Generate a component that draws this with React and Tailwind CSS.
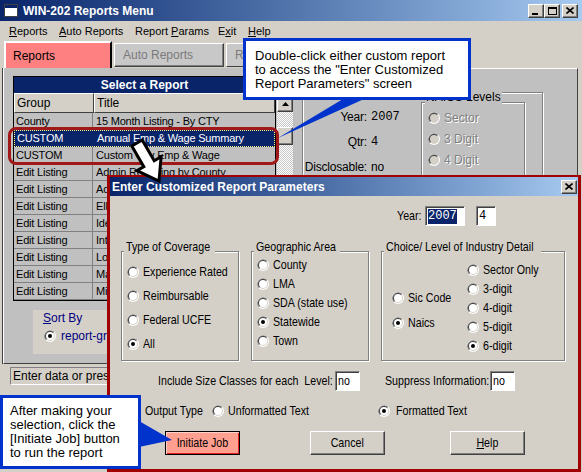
import React from "react";

function N({ children, center = false }) {
  return (
    <span
      className={`inline-block whitespace-pre scale-x-[0.82] ${
        center ? "origin-center" : "origin-left"
      }`}
    >
      {children}
    </span>
  );
}

function Radio({ checked = false, disabled = false }) {
  return (
    <svg width="12" height="12" viewBox="0 0 12 12" className="block shrink-0">
      <circle cx="6" cy="6" r="6" fill="#ffffff" />
      <path d="M1.76 10.24A6 6 0 0 1 10.24 1.76Z" fill="#808080" />
      <circle cx="6" cy="6" r="5" fill="#d4d0c8" />
      <path d="M2.46 9.54A5 5 0 0 1 9.54 2.46Z" fill="#404040" />
      <circle cx="6" cy="6" r="4" fill={disabled ? "#d4d0c8" : "#ffffff"} />
      {checked && <circle cx="6" cy="6" r="2" fill="#000000" />}
    </svg>
  );
}

function RadioRow({ label, checked, disabled, narrow = true }) {
  return (
    <div className="flex items-center gap-[4px] h-[16px] whitespace-nowrap">
      <Radio checked={checked} disabled={disabled} />
      {disabled ? (
        <span className="text-[#808080] [text-shadow:1px_1px_0_#ffffff]">{label}</span>
      ) : narrow ? (
        <N>{label}</N>
      ) : (
        <span>{label}</span>
      )}
    </div>
  );
}

function Group({ title, titleW, className = "", children }) {
  return (
    <div
      className={`border border-[#808080] shadow-[1px_1px_0_#ffffff,inset_1px_1px_0_#ffffff] flex flex-col ${className}`}
    >
      <div
        className={`-mt-[13px] ml-[2px] px-[2px] bg-[#d4d0c8] leading-[15px] whitespace-nowrap overflow-visible ${titleW}`}
      >
        <N>{title}</N>
      </div>
      {children}
    </div>
  );
}

function Input({ className = "", children }) {
  return (
    <div
      className={`h-[20px] bg-white border border-t-[#808080] border-l-[#808080] border-b-white border-r-white shadow-[inset_1px_1px_0_#404040] flex items-center pl-[2px] ${className}`}
    >
      {children}
    </div>
  );
}

function WinBtn({ children }) {
  return (
    <div className="w-[16px] h-[14px] bg-[#d4d0c8] border border-t-white border-l-white border-b-[#404040] border-r-[#404040] shadow-[inset_-1px_-1px_0_#808080] flex items-center justify-center">
      {children}
    </div>
  );
}

function CloseGlyph() {
  return (
    <svg width="8" height="7" viewBox="0 0 8 7" className="block">
      <path d="M0.5 0.5L7.5 6.5M7.5 0.5L0.5 6.5" stroke="#000" strokeWidth="1.6" />
    </svg>
  );
}

function DlgButton({ className = "", children }) {
  return (
    <div
      className={`h-[24px] w-[75px] bg-[#d4d0c8] border border-t-white border-l-white border-b-[#404040] border-r-[#404040] shadow-[inset_-1px_-1px_0_#808080] flex items-center justify-center ${className}`}
    >
      {children}
    </div>
  );
}

const rows = [
  ["County", "15 Month Listing - By CTY"],
  ["CUSTOM", "Annual Emp & Wage Summary", true],
  ["CUSTOM", "Custom Qtly Emp & Wage"],
  ["Edit Listing", "Admin Reporting by County"],
  ["Edit Listing", "Address Listing"],
  ["Edit Listing", "Ell Listing"],
  ["Edit Listing", "Identical Accounts"],
  ["Edit Listing", "Interstate Listing"],
  ["Edit Listing", "Location Listing"],
  ["Edit Listing", "Master File"],
  ["Edit Listing", "Missing Data"],
];

export default function App() {
  return (
    <div className="relative w-[582px] h-[472px] overflow-hidden bg-[#d4d0c8] font-['Liberation_Sans',Arial,sans-serif] text-black select-none">
      {/* Title bar */}
      <div className="h-[21px] flex items-center bg-linear-to-r from-[#0a246a] to-[#a6caf0]">
        <div className="ml-[4px] w-[14px] h-[13px] bg-white border border-[#404040] flex flex-col">
          <div className="h-[3px] bg-[#0a246a]" />
        </div>
        <span className="ml-[5px] text-white font-bold text-[12px] leading-none">
          WIN-202 Reports Menu
        </span>
        <div className="ml-auto mr-[4px] flex items-center">
          <WinBtn>
            <div className="w-[6px] h-[2px] bg-black mt-[6px] -ml-[2px]" />
          </WinBtn>
          <WinBtn>
            <div className="w-[9px] h-[8px] border border-black border-t-2" />
          </WinBtn>
          <div className="ml-[2px]">
            <WinBtn>
              <CloseGlyph />
            </WinBtn>
          </div>
        </div>
      </div>

      {/* Menu bar */}
      <div className="h-[20px] flex items-center text-[11px] pl-[9px]">
        <span className="w-[50px]">
          <span className="underline">R</span>eports
        </span>
        <span className="w-[76px]">
          <span className="underline">A</span>uto Reports
        </span>
        <span className="w-[83px]">
          Report <span className="underline">P</span>arams
        </span>
        <span className="w-[30px]">
          E<span className="underline">x</span>it
        </span>
        <span>
          <span className="underline">H</span>elp
        </span>
      </div>

      {/* Tabs */}
      <div className="h-[27px] flex items-end pl-[4px] text-[12px]">
        <div className="w-[108px] h-[27px] bg-[#ff8080] border-t-2 border-l-2 border-white border-r-2 border-r-black flex items-center pl-[7px]">
          Reports
        </div>
        <div className="ml-[2px] mb-[1px] w-[110px] h-[24px] bg-[#c8c8c8] border border-t-white border-l-white border-b-[#404040] border-r-[#404040] shadow-[inset_-1px_-1px_0_#808080] flex items-center pl-[8px] text-[#7a7a7a]">
          Auto Reports
        </div>
        <div className="ml-[2px] mb-[1px] w-[110px] h-[24px] bg-[#c8c8c8] border border-t-white border-l-white border-b-[#404040] border-r-[#404040] flex items-center pl-[8px] text-[#7a7a7a]">
          Report Params
        </div>
      </div>

      {/* Body */}
      <div className="h-[296px] flex">
        {/* Left panel */}
        <div className="ml-[3px] w-[294px] h-full bg-[#c0c0c0] border-l border-b border-l-white border-b-[#404040] shadow-[-1px_0_0_#404040] pl-[9px] pt-[8px] flex flex-col">
          <div className="flex">
            <div className="w-[263px] border border-black flex flex-col text-[11px] tracking-[-0.2px]">
              <div className="h-[16px] bg-[#0a246a] text-white font-bold text-[12px] tracking-normal flex items-center justify-center">
                Select a Report
              </div>
              <div className="h-[20px] flex text-[12px] tracking-normal">
                <div className="w-[80px] bg-[#d4d0c8] border border-t-white border-l-white border-b-[#404040] border-r-[#404040] flex items-center pl-[2px]">
                  Group
                </div>
                <div className="flex-1 bg-[#d4d0c8] border border-t-white border-l-white border-b-[#404040] border-r-[#404040] flex items-center pl-[2px]">
                  Title
                </div>
              </div>
              {rows.map(([g, t, sel], i) => (
                <div
                  key={i}
                  className={`h-[17px] flex whitespace-nowrap overflow-hidden ${
                    sel
                      ? "bg-[#0a246a] text-white border border-dotted border-[#ffff80]"
                      : "bg-[#c0c0c0] border-b border-[#808080]"
                  }`}
                >
                  <div
                    className={`w-[79px] shrink-0 pl-[2px] flex items-center ${
                      sel ? "" : "border-r border-[#808080]"
                    }`}
                  >
                    {g}
                  </div>
                  <div className="flex-1 pl-[3px] flex items-center">{t}</div>
                </div>
              ))}
            </div>
            {/* Scrollbar */}
            <div className="ml-[1px] mt-[20px] w-[16px] flex flex-col">
              <div className="h-[16px] bg-[#d4d0c8] border border-t-white border-l-white border-b-[#404040] border-r-[#404040] shadow-[inset_-1px_-1px_0_#808080] flex items-center justify-center">
                <svg width="7" height="4" viewBox="0 0 7 4" className="block">
                  <path d="M3.5 0L7 4H0Z" fill="#000" />
                </svg>
              </div>
              <div className="h-[15px] bg-[repeating-conic-gradient(#ffffff_0_25%,#c8c8c8_0_50%)] bg-[length:2px_2px]" />
              <div className="h-[18px] bg-[#d4d0c8] border border-t-white border-l-white border-b-[#404040] border-r-[#404040] shadow-[inset_-1px_-1px_0_#808080]" />
              <div className="flex-1 bg-[repeating-conic-gradient(#ffffff_0_25%,#c8c8c8_0_50%)] bg-[length:2px_2px]" />
            </div>
          </div>
          {/* Sort by */}
          <div className="mt-[9px] ml-[20px] w-[120px] h-[44px] bg-[#d4d0c8] pl-[10px] text-[12px] text-[#000080] flex flex-col">
            <div className="h-[16px] flex items-center">
              <span>
                <span className="underline">S</span>ort By
              </span>
            </div>
            <div className="mt-[2px] h-[16px] pl-[1px] flex items-center gap-[5px] whitespace-nowrap">
              <Radio checked />
              <span>report-group</span>
            </div>
          </div>
        </div>

        {/* Right panel */}
        <div className="flex-1 mr-[4px] h-full bg-[#c0c0c0] border-t border-white border-r border-r-[#404040] flex">
          <div className="ml-[5px] mt-[23px] w-[241px] h-[260px] border border-[#808080] shadow-[inset_1px_1px_0_#ffffff,1px_1px_0_#ffffff] flex">
            <div className="w-[118px] pt-[16px] flex flex-col gap-[9px] text-[12px] tracking-[-0.2px]">
              <div className="h-[16px] flex items-center">
                <span className="w-[64px] text-right">Year:</span>
                <span className="ml-[4px] font-['Liberation_Mono',monospace] tracking-normal">2007</span>
              </div>
              <div className="h-[16px] flex items-center">
                <span className="w-[64px] text-right">Qtr:</span>
                <span className="ml-[4px] font-['Liberation_Mono',monospace] tracking-normal">4</span>
              </div>
              <div className="h-[16px] flex items-center">
                <span className="w-[64px] text-right">Disclosable:</span>
                <span className="ml-[4px]">no</span>
              </div>
            </div>
            <div className="mt-[9px] w-[104px] h-[130px] border border-[#808080] shadow-[inset_1px_1px_0_#ffffff,1px_1px_0_#ffffff] flex flex-col text-[12px] bg-[#c0c0c0]">
              <div className="-mt-[13px] ml-[3px] px-[1px] bg-[#c0c0c0] w-fit leading-[15px] whitespace-nowrap">
                NAICS Levels
              </div>
              <div className="mt-[5px] pl-[6px] flex flex-col gap-[5px]">
                <RadioRow label="Sector" disabled />
                <RadioRow label="3 Digit" disabled />
                <RadioRow label="4 Digit" disabled />
              </div>
            </div>
          </div>
        </div>
      </div>

      {/* Status bar */}
      <div className="mt-[3px] ml-[10px] w-[300px] h-[18px] border border-t-[#808080] border-l-[#808080] border-b-white border-r-white flex items-center pl-[2px] text-[12px]">
        Enter data or press Enter to continue
      </div>

      {/* Red highlight around custom rows */}
      <div className="absolute left-[8px] top-[127px] w-[271px] h-[38px] border-[3px] border-[#a01818] rounded-[8px]" />

      {/* Top callout pointer */}
      <svg
        className="absolute left-[276px] top-[97px]"
        width="92"
        height="44"
        viewBox="0 0 92 44"
      >
        <polygon points="67,2 88,2 2,41" fill="#0033cc" />
      </svg>

      {/* Top callout */}
      <div className="absolute left-[243px] top-[38px] w-[228px] h-[62px] bg-white border-[3px] border-[#0033cc] pl-[9px] pt-[8px] text-[13px] leading-[14px] whitespace-nowrap">
        <div>Double-click either custom report</div>
        <div>to access the "Enter Customized</div>
        <div>Report Parameters" screen</div>
      </div>

      {/* Dialog */}
      <div className="absolute left-[107px] top-[175px] w-[474px] h-[297px] border-[3px] border-t-2 border-[#a00000] bg-[#d4d0c8] flex flex-col">
        <div className="h-[19px] shrink-0 flex items-center pl-[2px] bg-linear-to-r from-[#0a246a] to-[#a6caf0]">
          <span className="text-white font-bold text-[12px] leading-none">
            Enter Customized Report Parameters
          </span>
          <div className="ml-auto mr-[1px]">
            <WinBtn>
              <CloseGlyph />
            </WinBtn>
          </div>
        </div>
        <div className="flex-1 flex flex-col pl-[11px] text-[13px]">
          {/* Year row */}
          <div className="mt-[10px] ml-[276px] h-[20px] flex items-center">
            <span className="w-[28px]">
              <N>Year:</N>
            </span>
            <Input className="w-[40px]">
              <span className="bg-[#0a246a] text-white font-['Liberation_Mono',monospace] text-[12px] leading-[15px]">
                2007
              </span>
            </Input>
            <Input className="ml-[11px] w-[20px]">
              <span className="font-['Liberation_Mono',monospace] text-[12px]">4</span>
            </Input>
          </div>

          {/* Groups */}
          <div className="mt-[25px] h-[110px] flex gap-[12px]">
            <Group title="Type of Coverage" titleW="w-[91px]" className="w-[118px]">
              <div className="mt-[10px] pl-[5px] flex flex-col gap-[8px]">
                <RadioRow label="Experience Rated" />
                <RadioRow label="Reimbursable" />
                <RadioRow label="Federal UCFE" />
                <RadioRow label="All" checked />
              </div>
            </Group>
            <Group title="Geographic Area" titleW="w-[86px]" className="w-[118px]">
              <div className="mt-[3px] pl-[5px] flex flex-col gap-[3px]">
                <RadioRow label="County" />
                <RadioRow label="LMA" />
                <RadioRow label="SDA (state use)" />
                <RadioRow label="Statewide" checked />
                <RadioRow label="Town" />
              </div>
            </Group>
            <Group
              title="Choice/ Level of Industry Detail"
              titleW="w-[157px]"
              className="w-[184px]"
            >
              <div className="flex">
                <div className="w-[85px] pl-[10px] mt-[36px] flex flex-col gap-[9px]">
                  <RadioRow label="Sic Code" />
                  <RadioRow label="Naics" checked />
                </div>
                <div className="mt-[8px] flex flex-col gap-[3px]">
                  <RadioRow label="Sector Only" />
                  <RadioRow label="3-digit" />
                  <RadioRow label="4-digit" />
                  <RadioRow label="5-digit" />
                  <RadioRow label="6-digit" checked />
                </div>
              </div>
            </Group>
          </div>

          {/* Include / Suppress row */}
          <div className="mt-[10px] h-[20px] flex items-center whitespace-nowrap">
            <span className="ml-[37px] w-[173px]">
              <N>Include Size Classes for each  Level:</N>
            </span>
            <Input className="ml-[4px] w-[25px]">
              <N>no</N>
            </Input>
            <span className="ml-[25px] w-[103px]">
              <N>Suppress Information:</N>
            </span>
            <Input className="ml-[2px] w-[25px]">
              <N>no</N>
            </Input>
          </div>

          {/* Output type row */}
          <div className="mt-[12px] h-[16px] flex items-center whitespace-nowrap">
            <span className="ml-[24px] w-[59px]">
              <N>Output Type</N>
            </span>
            <span className="ml-[8px]">
              <Radio />
            </span>
            <span className="ml-[4px] w-[82px]">
              <N>Unformatted Text</N>
            </span>
            <span className="ml-[68px]">
              <Radio checked />
            </span>
            <span className="ml-[6px]">
              <N>Formatted Text</N>
            </span>
          </div>

          {/* Buttons */}
          <div className="mt-[12px] h-[24px] flex">
            <div className="ml-[44px] w-[75px] h-[24px] bg-[#ff9f90] border border-black shadow-[inset_1px_1px_0_#ffd0c8,inset_-1px_-1px_0_#e02020] flex items-center justify-center">
              <N center>Initiate Job</N>
            </div>
            <DlgButton className="ml-[70px]">
              <N center>Cancel</N>
            </DlgButton>
            <DlgButton className="ml-[65px]">
              <N center>
                <span className="underline">H</span>elp
              </N>
            </DlgButton>
          </div>
        </div>
      </div>

      {/* Arrow from list to dialog */}
      <svg
        className="absolute left-[122px] top-[134px]"
        width="52"
        height="56"
        viewBox="0 0 52 56"
      >
        <g transform="translate(26 28) rotate(-30) translate(-14 -22)">
          <polygon
            points="8,0 20,0 20,24 28,24 14,44 0,24 8,24"
            fill="#ffffff"
            stroke="#000000"
            strokeWidth="3"
            strokeLinejoin="miter"
          />
        </g>
      </svg>

      {/* Bottom callout pointer */}
      <svg
        className="absolute left-[136px] top-[419px]"
        width="40"
        height="32"
        viewBox="0 0 40 32"
      >
        <polygon points="3,2 3,28 36,21" fill="#0033cc" />
      </svg>

      {/* Bottom callout */}
      <div className="absolute left-0 top-[395px] w-[141px] h-[74px] bg-white border-[3px] border-[#0033cc] pl-[7px] pt-[6px] text-[13px] leading-[14px] whitespace-nowrap">
        <div>After making your</div>
        <div>selection, click the</div>
        <div>[Initiate Job] button</div>
        <div>to run the report</div>
      </div>
    </div>
  );
}
